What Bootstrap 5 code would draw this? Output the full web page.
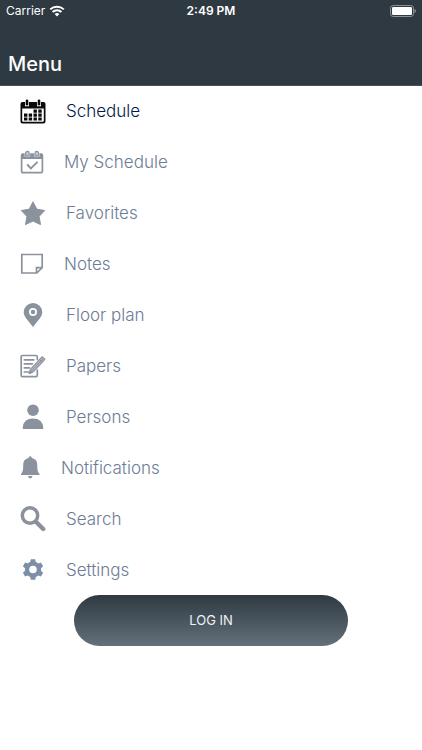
<!DOCTYPE html>
<html lang="en">
<head>
<meta charset="utf-8">
<meta name="viewport" content="width=device-width, initial-scale=1">
<title>Menu</title>
<link href="https://cdn.jsdelivr.net/npm/bootstrap@5.3.0/dist/css/bootstrap.min.css" rel="stylesheet">
<style>
body { font-family: Inter, "Liberation Sans", sans-serif; background: #fff; }
.app-header { background: #2e3942; color: #fff; box-shadow: 0 1px #46525a; }
.status-bar { height: 22px; padding: 0 6px; font-size: 12px; line-height: 22px; }
.status-bar > * { flex: 1 1 0; }
.status-time { font-weight: 600; }
.page-title { font-size: 20px; line-height: 24px; font-weight: 500; padding: 30px 8px 9px; }
.menu-link { height: 51px; padding: 0 20px; color: #6c7c95; font-size: 17px; line-height: 24px; font-weight: 300; }
.menu-link:hover { color: #0c2150; }
.menu-link.active { color: #04194a; }
.menu-link svg { height: 27px; margin: 2px 20px 0 0; color: #8a929d; flex: none; }
.menu-link.active svg { color: #0b0b0b; }
.menu-link .gear { color: #7d8fa6; }
.login-btn { width: 65%; height: 51px; color: #eef3f6; font-size: 13px; background: linear-gradient(#2e3942, #64717a); }
.login-btn:hover { color: #fff; }
</style>
<script src="https://cdn.jsdelivr.net/npm/bootstrap@5.3.0/dist/js/bootstrap.bundle.min.js"></script>
</head>
<body>
<header class="app-header">
  <div class="status-bar d-flex align-items-center">
    <div class="d-flex align-items-center gap-1">
      <span>Carrier</span>
      <svg width="16" height="12" viewBox="0 0 16 12" fill="none" stroke="#fff" stroke-width="2" aria-hidden="true"><path d="M1.2 4.4a9.8 9.8 0 0 1 13.6 0M3.6 7a6.300 6.300 0 0 1 8.800 0"/><path d="M8 11.600 5.600 9.100a3.400 3.400 0 0 1 4.800 0z" fill="#fff" stroke="none"/></svg>
    </div>
    <div class="status-time text-center">2:49 PM</div>
    <div class="d-flex justify-content-end">
      <svg width="27" height="12" viewBox="0 0 27 12" aria-hidden="true"><rect x="1.500" y=".5" width="23" height="11" rx="2.700" fill="none" stroke="#8b9398"/><rect x="3" y="2" width="20" height="8" rx="1.200" fill="#fff"/><path d="M25.500 4v4q1.500-.6 1.500-2t-1.500-2z" fill="#8b9398"/></svg>
    </div>
  </div>
  <h1 class="page-title m-0">Menu</h1>
</header>
<main>
  <nav class="nav flex-column" aria-label="Menu">
    <a class="menu-link active d-flex align-items-center text-decoration-none" aria-current="page" href="#schedule">
      <svg width="26" viewBox="0 0 26 27" fill="currentColor" aria-hidden="true"><path fill-rule="evenodd" d="M2.500 4h21q2 0 2 2v17.500q0 2-2 2h-21q-2 0-2-2V6q0-2 2-2zM2.200 10.500v12.300q0 1 1 1h19.600q1 0 1-1V10.500z"/><path d="M5 2.500h4v5.800H5zM17 2.500h4v5.800h-4z" fill="#fff"/><rect x="5.700" y="1.500" width="2.600" height="6" rx="1.200"/><rect x="17.700" y="1.500" width="2.600" height="6" rx="1.200"/><path d="M13.500 11.500h3.400v3.200h-3.400zM18.300 11.500h3.400v3.200h-3.400zM4 15.500h3.400v3.200H4zM8.700 15.500h3.400v3.200H8.700zM13.500 15.500h3.400v3.200h-3.400zM18.300 15.500h3.400v3.200h-3.400zM4 19.500h3.400v3.100H4zM8.700 19.500h3.400v3.100H8.700zM13.500 19.500h3.400v3.100h-3.400zM18.300 19.500h3.400v3.100h-3.400z"/></svg>
      Schedule</a>
    <a class="menu-link d-flex align-items-center text-decoration-none" href="#my-schedule">
      <svg width="24" viewBox="0 0 24 27" fill="none" stroke="currentColor" aria-hidden="true"><rect x="1.600" y="5" width="20.800" height="18.700" rx="1.200" stroke-width="1.700"/><path d="M1.500 5h21v5h-21z" fill="currentColor" stroke="none"/><path d="M7.400 7.500V4.200M16.800 7.500V4.200" stroke="#fff" stroke-width="5.600"/><path d="M5.600 6.800V4.200a1.800 1.800 0 0 1 3.600 0v2.600zM15 6.800V4.200a1.800 1.800 0 0 1 3.600 0v2.600z" fill="#c5c9ce" stroke-width="1.100"/><path d="m7.200 15.500 3.700 3.900 6.600-6.600" stroke-width="1.900"/></svg>
      My Schedule</a>
    <a class="menu-link d-flex align-items-center text-decoration-none" href="#favorites">
      <svg width="26" viewBox="0 0 26 27" fill="currentColor" stroke="currentColor" stroke-linejoin="round" aria-hidden="true"><path d="m13 1.800 3.800 7.400 7.900 1.300-5.600 5.900 1.400 8.200-7.500-3.600-7.500 3.600 1.400-8.200-5.600-5.900 7.900-1.300z"/></svg>
      Favorites</a>
    <a class="menu-link d-flex align-items-center text-decoration-none" href="#notes">
      <svg width="24" viewBox="0 0 24 27" fill="none" stroke="currentColor" stroke-width="1.700" aria-hidden="true"><path d="M1.800 3.500h20.400v13.200L16.800 22h-15zM16.500 22v-5.300h5.700"/></svg>
      Notes</a>
    <a class="menu-link d-flex align-items-center text-decoration-none" href="#floor-plan">
      <svg width="26" viewBox="0 0 26 27" fill="currentColor" aria-hidden="true"><path fill-rule="evenodd" d="M13 1a9.300 9.300 0 0 1 9.300 9.300C22.300 15 17 19.500 13 25 9 19.500 3.700 15 3.700 10.300A9.300 9.300 0 0 1 13 1zm0 5a4 4 0 1 0 0 8 4 4 0 0 0 0-8z"/><circle cx="13" cy="10" r="2.200"/></svg>
      Floor plan</a>
    <a class="menu-link d-flex align-items-center text-decoration-none" href="#papers">
      <svg width="26" viewBox="0 0 26 27" fill="none" stroke="currentColor" stroke-width="1.700" aria-hidden="true"><path d="M17.300 6.500V4q0-1.500-1.500-1.500H2.500Q1.200 2.500 1.200 4v18.500q0 1.200 1.300 1.200h13.300q1.500 0 1.500-1.300V17M4.300 6.800h9.500M4.300 10.800h8M4.300 14.800h5.200M4.300 19h4" stroke-linecap="round"/><path d="M10.500 16.300 22 3.800l2.800 2.500-11.500 12.500L9.300 20.500z" fill="#b6bbc2" stroke-width="1.200" stroke-linejoin="round"/><path d="m12 17.500 11.200-12M19.500 6.500l2.800 2.500M9.300 20.500l1-3.200 2.200 2z" stroke-width="1"/></svg>
      Papers</a>
    <a class="menu-link d-flex align-items-center text-decoration-none" href="#persons">
      <svg width="26" viewBox="0 0 26 27" fill="currentColor" aria-hidden="true"><circle cx="13" cy="6.200" r="5.800"/><path d="M2.800 25v-1.500Q3.500 14.500 13 14.500T23.200 23.500V25z"/></svg>
      Persons</a>
    <a class="menu-link d-flex align-items-center text-decoration-none" href="#notifications">
      <svg width="21" viewBox="0 0 21 27" fill="currentColor" aria-hidden="true"><path d="M10.200 1.200q1.500 0 1.700 1.700c3.600.8 5.400 3.200 5.400 6.600 0 5.500.3 7.200 2.200 9.500v1H1V19c1.900-2.300 2.200-4 2.200-9.500 0-3.400 1.700-5.800 5.300-6.600q.2-1.700 1.700-1.700zM8 21h4.500q-.2 2.300-2.200 2.400T8 21z"/></svg>
      Notifications</a>
    <a class="menu-link d-flex align-items-center text-decoration-none" href="#search">
      <svg width="26" viewBox="0 0 26 27" fill="none" stroke="currentColor" stroke-linecap="round" aria-hidden="true"><circle cx="10" cy="9.500" r="7.700" stroke-width="3.500"/><path d="m16.200 16 7 7" stroke-width="4.400"/></svg>
      Search</a>
    <a class="menu-link d-flex align-items-center text-decoration-none" href="#settings">
      <svg class="gear" width="26" viewBox="-13 -12.500 26 27" fill="currentColor" aria-hidden="true"><path fill-rule="evenodd" d="M-2.200-10.300h4.400l.6 2.800q1.300.5 2.400 1.400l2.700-.9 2.200 3.800-2.100 1.900q.2 1.300 0 2.600l2.100 1.900-2.200 3.800-2.700-.9q-1.100.9-2.400 1.400l-.6 2.800h-4.400l-.6-2.800q-1.300-.5-2.400-1.400l-2.700.9-2.200-3.800L-8 1.300q-.2-1.300 0-2.600l-2.100-1.900L-7.900-7l2.700.9q1.100-.9 2.400-1.400zM0-3.800a3.800 3.800 0 1 0 0 7.600 3.800 3.800 0 0 0 0-7.600z"/></svg>
      Settings</a>
  </nav>
  <div class="text-center">
    <button type="button" class="login-btn btn rounded-pill border-0">LOG IN</button>
  </div>
</main>
</body>
</html>
